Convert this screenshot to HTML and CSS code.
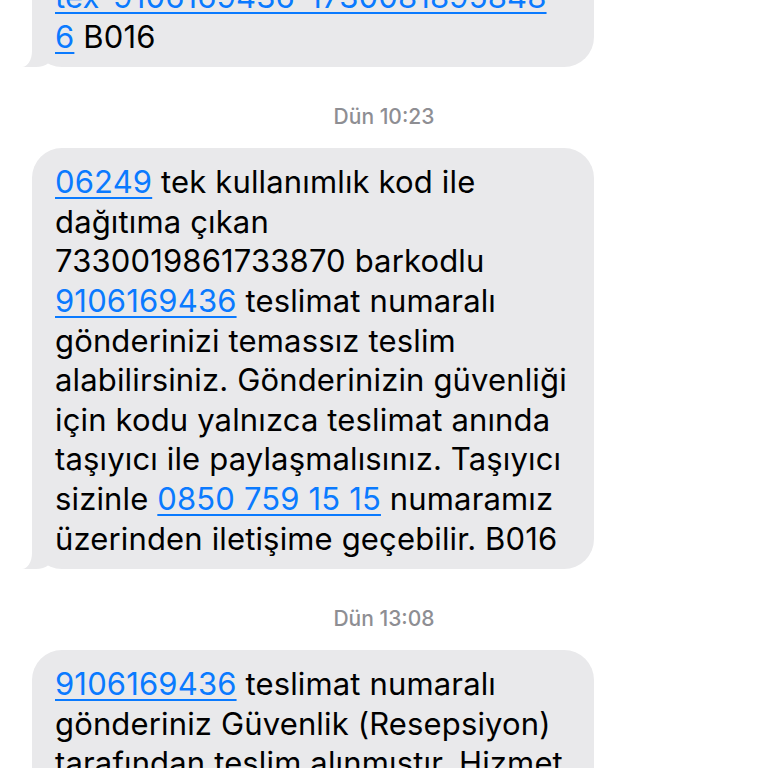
FILE: index.html
```html
<!DOCTYPE html>
<html lang="tr">
<head>
<meta charset="utf-8">
<title>Mesajlar</title>
<link rel="stylesheet" href="styles.css">
</head>
<body>
<main class="thread">
  <div class="bubble bubble-first">
    <p class="msg"><a class="link" href="#">tex-9106169436-1730081895848<br>6</a> B016</p>
  </div>

  <div class="stamp"><span class="day">Dün</span> 10:23</div>

  <div class="bubble">
    <p class="msg"><a class="link" href="#">06249</a> tek kullanımlık kod ile<br>dağıtıma çıkan<br>7330019861733870 barkodlu<br><a class="link" href="#">9106169436</a> teslimat numaralı<br>gönderinizi temassız teslim<br>alabilirsiniz. Gönderinizin güvenliği<br>için kodu yalnızca teslimat anında<br>taşıyıcı ile paylaşmalısınız. Taşıyıcı<br>sizinle <a class="link" href="#">0850 759 15 15</a> numaramız<br>üzerinden iletişime geçebilir. B016</p>
  </div>

  <div class="stamp"><span class="day">Dün</span> 13:08</div>

  <div class="bubble">
    <p class="msg"><a class="link" href="#">9106169436</a> teslimat numaralı<br>gönderiniz Güvenlik (Resepsiyon)<br>tarafından teslim alınmıştır. Hizmet<br>kalitemizi değerlendirmek için<br>anketimize katılabilirsiniz. B016</p>
  </div>
</main>
</body>
</html>
```

FILE: styles.css
```css
* { box-sizing: border-box; }

html, body {
  margin: 0;
  padding: 0;
  background: #ffffff;
}

body {
  font-family: Inter, "Noto Sans", "DejaVu Sans", sans-serif;
  color: #000000;
  overflow: hidden;
  height: 768px;
}

.thread {
  display: flex;
  flex-direction: column;
  padding-left: 32px;
}

.bubble {
  position: relative;
  width: 562px;
  background: #e9e9eb;
  border-radius: 30px;
  padding: 14px 20px 11px 23px;
}

.bubble::before {
  content: "";
  position: absolute;
  left: -10px;
  bottom: 0;
  width: 32px;
  height: 30px;
  background: #e9e9eb;
  border-bottom-right-radius: 18px 14px;
}

.bubble::after {
  content: "";
  position: absolute;
  left: -34px;
  bottom: 0;
  width: 34px;
  height: 32px;
  background: #ffffff;
  border-bottom-right-radius: 10px 16px;
}

.bubble-first {
  margin-top: -37px;
}

.msg {
  position: relative;
  z-index: 1;
  margin: 0;
  font-size: 31px;
  line-height: 39.6px;
  white-space: nowrap;
  letter-spacing: 0.15px;
}

.link {
  color: #0a7aff;
  text-decoration: underline;
  text-decoration-thickness: 2px;
  text-underline-offset: 4px;
}

.stamp {
  width: 736px;
  margin: 37.5px 0 19.5px -16px;
  text-align: center;
  font-size: 21px;
  line-height: 24px;
  font-weight: 500;
  color: #8e8e93;
}
```
